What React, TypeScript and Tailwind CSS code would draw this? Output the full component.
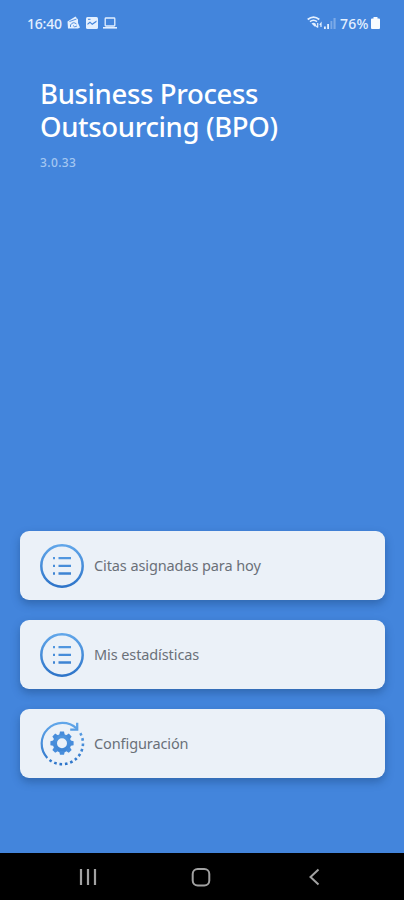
import type { ReactNode } from "react";

const GEAR_TEETH = [0, 45, 90, 135, 180, 225, 270, 315];

function StatusBar() {
  return (
    <header className="h-[47px] pl-[27px] pr-[24px] flex items-center justify-between text-[#e4f0ff] text-[14px] leading-none font-medium">
      <div className="flex items-center">
        <span className="w-[36px] tracking-[-0.2px] whitespace-nowrap">16:40</span>
        {/* Cards with a sync mark */}
        <svg className="ml-[4px] mb-[2px]" width="13" height="13" viewBox="0 0 13 13" fill="none">
          <path d="M0.5 5.5 8.5 0.5 11 3.5V7L13 11.5 11 12.5H1Z" fill="currentColor" />
          <path d="M2.5 5.5 9.5 3M3.5 11V9Q6 5 9.5 8M6 9.5Q7.5 12 10 10" stroke="#4385dc" strokeWidth="0.9" />
        </svg>
        <svg className="ml-[6px] mb-[2px]" width="12" height="12" viewBox="0 0 12 12">
          <rect width="12" height="12" rx="1.5" fill="currentColor" />
          <path d="M1.5 6.5 4 4.5 6.2 6.5 10.5 3.5V5L6.2 8 4 6 1.5 8Z" fill="#4385dc" />
          <path d="M2 2.3H4.5" stroke="#4385dc" />
        </svg>
        <svg className="ml-[5px] mb-[2px]" width="14" height="12" viewBox="0 0 14 12" fill="none" stroke="currentColor">
          <rect x="2.2" y="1" width="9.6" height="8" rx="0.8" strokeWidth="1.3" />
          <path d="M0 10.8H14" strokeWidth="1.6" />
        </svg>
      </div>

      <div className="flex items-center">
        <svg className="mb-[2px]" width="16" height="13" viewBox="0 0 16 13" fill="none" stroke="currentColor">
          <path d="M0.7 3.5Q6.5 -1.2 12.3 3.5" strokeWidth="1.8" />
          <path d="M3 5.7Q6.5 2.8 10 5.7" strokeWidth="1.6" />
          <path d="M4.5 7.5Q6.5 6 8.5 7.5L9.5 10.5H7.5Z" fill="currentColor" stroke="none" />
          <path d="M10.7 7V11.5M9.3 9.8 10.7 11.5M14 11V7.3L12.8 8.8" strokeWidth="1.2" />
        </svg>
        <svg className="ml-[1px] mb-[2px]" width="12" height="12" viewBox="0 0 12 12" fill="currentColor">
          <path d="M0 9.5H1.8V12H0ZM3.2 7H5V12H3.2Z" />
          <path d="M6.5 4H8.3V12H6.5ZM9.5 1H11.6V12H9.5Z" opacity="0.35" />
        </svg>
        <span className="ml-[4px] w-[31px] tracking-[0.2px] whitespace-nowrap">76%</span>
        <svg className="mb-[2px]" width="9" height="12" viewBox="0 0 9 12" fill="#f7fbff">
          <path d="M2.5 0H6.5V1.5H8Q9 1.5 9 2.5V11Q9 12 8 12H1Q0 12 0 11V2.5Q0 1.5 1 1.5H2.5Z" />
        </svg>
      </div>
    </header>
  );
}

function ListIcon({ id }: { id: string }) {
  return (
    <svg width="44" height="44" viewBox="0 0 44 44" fill="none" className="shrink-0">
      <defs>
        <linearGradient id={id} x1="0" y1="0" x2="0" y2="44" gradientUnits="userSpaceOnUse">
          <stop stopColor="#62a7ea" />
          <stop offset="1" stopColor="#2c73c8" />
        </linearGradient>
      </defs>
      <circle cx="22" cy="22" r="20.7" stroke={`url(#${id})`} strokeWidth="2.5" />
      <path
        d="M13 14.1H15M18.5 14.1H31M13 21.8H15M18.5 21.8H31M13 29.5H15M18.5 29.5H31"
        stroke={`url(#${id})`}
        strokeWidth="2.3"
      />
    </svg>
  );
}

function SettingsIcon() {
  return (
    <svg width="44" height="44" viewBox="0 0 44 44" fill="none" className="shrink-0 overflow-visible">
      <defs>
        <linearGradient id="settings" x1="0" y1="0" x2="0" y2="44" gradientUnits="userSpaceOnUse">
          <stop stopColor="#62a7ea" />
          <stop offset="1" stopColor="#2c73c8" />
        </linearGradient>
      </defs>
      <g stroke="url(#settings)">
        <path d="M7.3 35.9A20.8 20.8 0 0 1 36.7 6.5" strokeWidth="2.2" />
        <path d="M37.2 0.8V7.6H30.2" strokeWidth="2.3" />
        <path d="M40.3 11.2A20.8 20.8 0 0 1 9 37.5" strokeWidth="2.6" strokeDasharray="2.6 2.8" />
        <circle cx="22" cy="21.2" r="7.1" strokeWidth="4.2" />
      </g>
      {GEAR_TEETH.map((angle) => (
        <path
          key={angle}
          d="M19.1 13.4 20 9.6H24L24.9 13.4Z"
          fill="#468cdb"
          transform={`rotate(${angle} 22 21.2)`}
        />
      ))}
    </svg>
  );
}

function MenuCard({ icon, label }: { icon: ReactNode; label: string }) {
  return (
    <button className="h-[69px] w-full pl-5 flex items-center gap-[10px] rounded-[9px] bg-[#ebf1f8] text-left text-[14.5px] tracking-[-0.1px] text-[#6a7078] shadow-[0_4px_8px_rgba(20,60,110,0.4)]">
      {icon}
      <span className="pt-px">{label}</span>
    </button>
  );
}

function NavigationBar() {
  return (
    <nav className="h-[47px] bg-black grid grid-cols-[97px_123px_100px] text-[#a2a2a2]">
      <button className="flex items-center justify-end" aria-label="Recents">
        <svg width="18" height="18" viewBox="0 0 18 18" fill="none" stroke="currentColor" strokeWidth="2.2">
          <path d="M2 1V17M9 1V17M16 1V17" />
        </svg>
      </button>
      <button className="pr-[9px] flex items-center justify-end" aria-label="Home">
        <svg width="20" height="20" viewBox="0 0 20 20" fill="none" stroke="currentColor" strokeWidth="2">
          <rect x="1.7" y="2" width="16.6" height="16.5" rx="5" />
        </svg>
      </button>
      <button className="flex items-center justify-end" aria-label="Back">
        <svg width="12" height="18" viewBox="0 0 12 18" fill="none" stroke="currentColor" strokeWidth="2">
          <path d="M10.5 1.5 2.5 9 10.5 16.5" />
        </svg>
      </button>
    </nav>
  );
}

export default function App() {
  return (
    <div className="w-[404px] h-[900px] flex flex-col overflow-hidden bg-[#4385dc] font-['Noto_Sans',sans-serif]">
      <StatusBar />

      <main className="flex-1 flex flex-col justify-between">
        <div className="pl-10 pt-[30px]">
          <h1 className="text-[27.5px] leading-[33px] font-medium tracking-[-0.35px] text-white whitespace-nowrap">
            Business Process
            <br />
            Outsourcing (BPO)
          </h1>
          <p className="mt-[11px] text-[12px] leading-[18px] font-medium tracking-[0.4px] text-[#a3c7f1]">3.0.33</p>
        </div>

        {/* Menu */}
        <div className="pl-5 pr-[19px] pb-[75px] flex flex-col gap-5">
          <MenuCard icon={<ListIcon id="today" />} label="Citas asignadas para hoy" />
          <MenuCard icon={<ListIcon id="stats" />} label="Mis estadísticas" />
          <MenuCard icon={<SettingsIcon />} label="Configuración" />
        </div>
      </main>

      <NavigationBar />
    </div>
  );
}
